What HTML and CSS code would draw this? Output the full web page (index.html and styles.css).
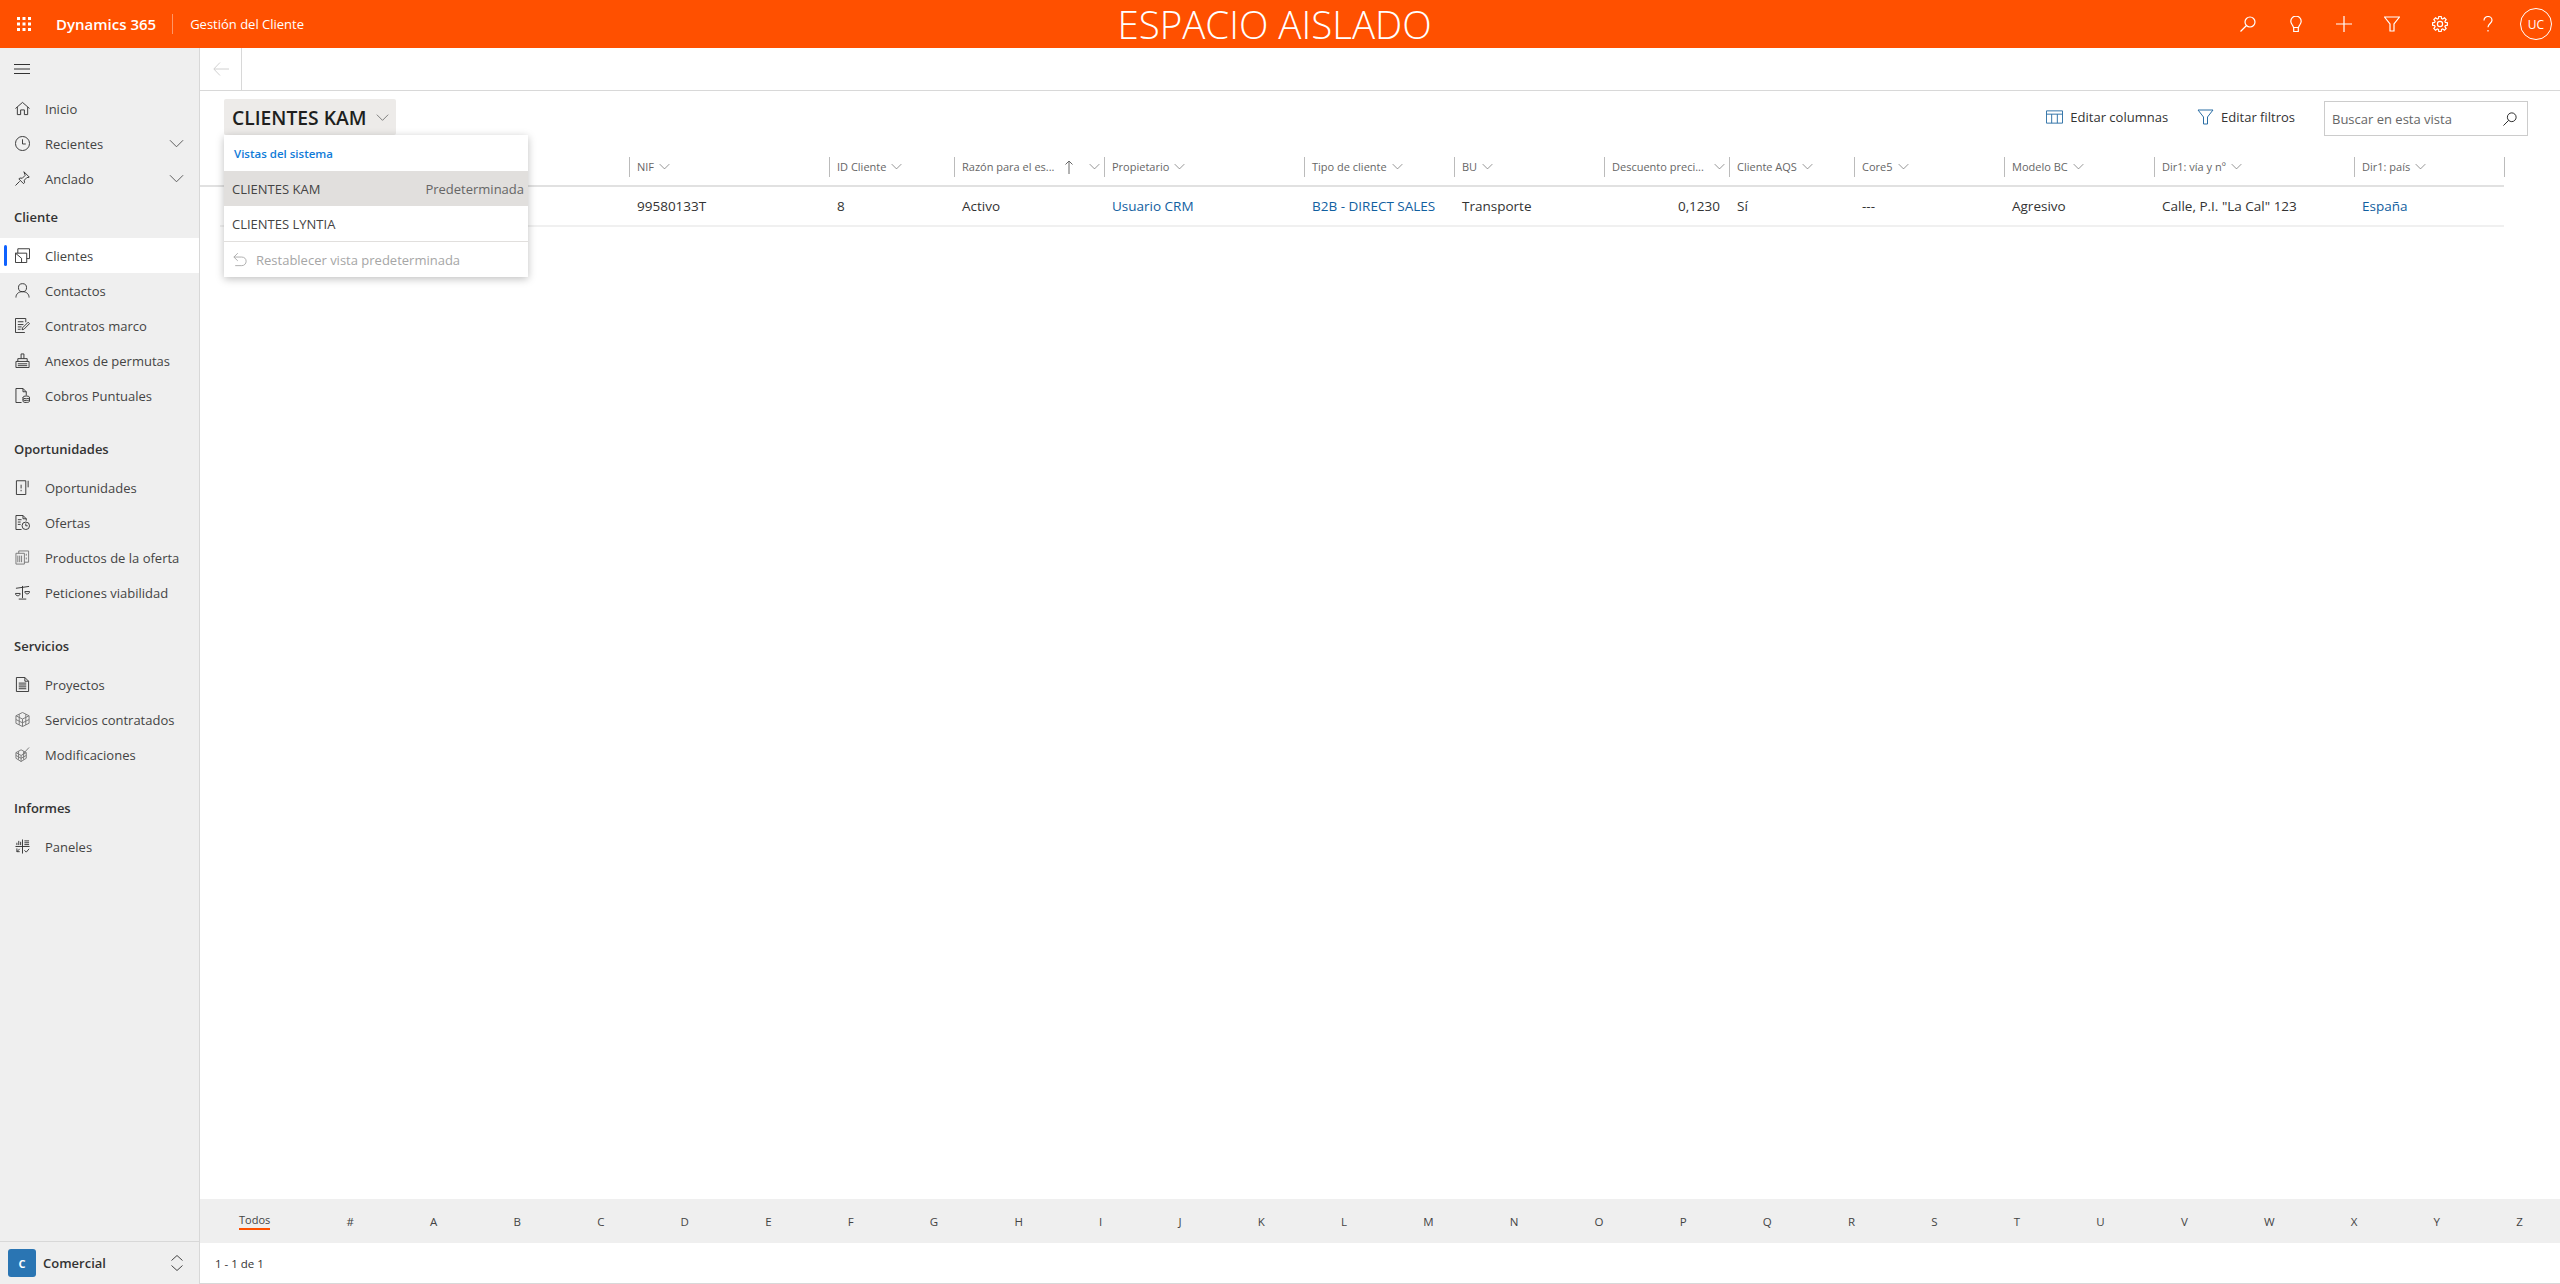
FILE: index.html
```html
<!DOCTYPE html>
<html lang="es">
<head>
    <meta charset="UTF-8">
    <title>Clientes - Gestión del Cliente</title>
    <link rel="stylesheet" href="styles.css">
</head>
<body>
    <svg class="defs" width="0" height="0">
        <symbol id="chev" viewBox="0 0 16 16"><path d="M1 4.500l7 7 7-7"/></symbol>
    </svg>

    <header class="topbar">
        <svg class="waffle" viewBox="0 0 16 16"><path d="M1 1h3v3H1zM6.500 1h3v3h-3zM12 1h3v3h-3zM1 6.500h3v3H1zM6.500 6.500h3v3h-3zM12 6.500h3v3h-3zM1 12h3v3H1zM6.500 12h3v3h-3zM12 12h3v3h-3z"/></svg>
        <span class="brand">Dynamics 365</span>
        <span class="app-name">Gestión del Cliente</span>
        <div class="env-title">ESPACIO AISLADO</div>
        <div class="top-actions">
            <button class="top-btn"><svg viewBox="0 0 16 16"><circle cx="10" cy="6" r="5"/><path d="M6.500 9.500L.5 15.500"/></svg></button>
            <button class="top-btn"><svg viewBox="0 0 16 16"><path d="M5.500 11.500C5 9 2.800 8 2.800 5.300a5.200 5.200 0 0 1 10.400 0c0 2.700-2.200 3.700-2.700 6.200zM5.700 11.500v4h4.600v-4"/></svg></button>
            <button class="top-btn"><svg viewBox="0 0 16 16"><path d="M8 0v16M0 8h16"/></svg></button>
            <button class="top-btn"><svg viewBox="0 0 16 16"><path d="M.5 1h15l-5.500 7v7H6V8z"/></svg></button>
            <button class="top-btn"><svg viewBox="0 0 16 16"><circle cx="8" cy="8" r="2.600"/><path d="M13.380 6.460L15.510 6.810V9.190L13.380 9.540L12.900 10.710L14.150 12.470L12.470 14.150L10.710 12.900L9.540 13.380L9.190 15.510H6.810L6.460 13.380L5.290 12.900L3.530 14.150L1.850 12.470L3.100 10.710L2.620 9.540L.49 9.190V6.810L2.620 6.460L3.100 5.290L1.850 3.530L3.530 1.850L5.290 3.100L6.460 2.620L6.810 .49H9.190L9.540 2.620L10.710 3.100L12.470 1.850L14.150 3.530L12.900 5.290Z"/></svg></button>
            <button class="top-btn"><svg viewBox="0 0 16 16"><path d="M4 4.500C4 2 6 .5 8 .5s4 1.500 4 3.800c0 3-4 3.500-4 7M8 14v1.500"/></svg></button>
            <div class="avatar">UC</div>
        </div>
    </header>

    <div class="shell">
        <nav class="sidebar">
            <div class="burger"><svg viewBox="0 0 16 10"><path d="M0 .5h16M0 5h16M0 9.500h16"/></svg></div>

            <a class="nav-item"><svg class="nav-ico" viewBox="0 0 16 16"><path d="M.5 8L8 1.500 15.500 8M2.500 6.500v8h3.500v-5h4v5h3.500v-8"/></svg>Inicio</a>
            <a class="nav-item"><svg class="nav-ico" viewBox="0 0 16 16"><circle cx="8" cy="8" r="7.500"/><path d="M8 3.500V8.500h3.500"/></svg>Recientes<svg class="nav-chev"><use href="#chev"/></svg></a>
            <a class="nav-item"><svg class="nav-ico" viewBox="0 0 16 16"><path d="M9.500.8l5.700 5.700-1.300.6-1-.3-3 3 .2 2.700-1 1-5-5 1-1 2.700.2 3-3-.3-1zM5 11L.5 15.500"/></svg>Anclado<svg class="nav-chev"><use href="#chev"/></svg></a>

            <h3 class="nav-heading">Cliente</h3>
            <a class="nav-item active"><svg class="nav-ico" viewBox="0 0 16 16"><path d="M.5 5.500h12v10H.5zM.5 5.500L7 11v4.500M3 5.500V.8h12.500v10.500h-3"/></svg>Clientes</a>
            <a class="nav-item"><svg class="nav-ico" viewBox="0 0 16 16"><circle cx="8" cy="5" r="4.300"/><path d="M1 15.500c0-3.500 2.500-6.300 7-6.300s7 2.800 7 6.300"/></svg>Contactos</a>
            <a class="nav-item"><svg class="nav-ico" viewBox="0 0 16 16"><path d="M10.500 15.500H.5V.5h11v4M3 4h6M3 7h6M3 9.500h4M3 12h3M7.500 12.500l.5-2 6-6 1.500 1.500-6 6z"/></svg>Contratos marco</a>
            <a class="nav-item"><svg class="nav-ico" viewBox="0 0 16 16"><path d="M1 9h14v6.500H1zM3 9V6h10v3M6.500 6V1h3v5M3 11.500h10M3 13.500h10"/></svg>Anexos de permutas</a>
            <a class="nav-item"><svg class="nav-ico" viewBox="0 0 16 16"><path d="M7 15.500H1V.5h7.500l3.500 3.500v4M8.500.5V4H12"/><ellipse cx="12" cy="10" rx="3.500" ry="1.500"/><path d="M8.500 10v4c0 .8 1.500 1.500 3.500 1.500s3.500-.7 3.500-1.500v-4M8.500 12c0 .8 1.500 1.500 3.500 1.500s3.500-.7 3.500-1.500"/></svg>Cobros Puntuales</a>

            <h3 class="nav-heading spaced">Oportunidades</h3>
            <a class="nav-item"><svg class="nav-ico" viewBox="0 0 16 16"><path d="M1.500.8h10v14.700h-10zM14 .8v7M6.500 5v4M6.500 10.500v1.500"/></svg>Oportunidades</a>
            <a class="nav-item"><svg class="nav-ico" viewBox="0 0 16 16"><path d="M7 15.500H1V.5h7.500L12 4v2M8.500.5V4H12M3 5h4M3 7.500h3M3 10h3"/><circle cx="11.500" cy="11.500" r="4"/><path d="M11.500 9v2.500h2"/></svg>Ofertas</a>
            <a class="nav-item"><svg class="nav-ico muted" viewBox="0 0 16 16"><path d="M1 3.500h9v11.500H1zM4 3.500V1h10.500v12H10M3 6v7M5 6v7M7 6v7M12 4v2M12 8v2"/></svg>Productos de la oferta</a>
            <a class="nav-item"><svg class="nav-ico" viewBox="0 0 16 16"><path d="M8 1v13M4 15h8M1 3.500l14-2M.5 9c0 1.500 1 2.500 2.500 2.500s2.500-1 2.500-2.500zM10.500 7c0 1.500 1 2.500 2.500 2.500s2.500-1 2.500-2.500z"/></svg>Peticiones viabilidad</a>

            <h3 class="nav-heading spaced">Servicios</h3>
            <a class="nav-item"><svg class="nav-ico" viewBox="0 0 16 16"><path d="M1.500 15.500V.5h9l4 4v11zM10.500.5v4h4M4 6.500h8M4 8.500h8M4 10.500h8M4 12.500h8"/></svg>Proyectos</a>
            <a class="nav-item"><svg class="nav-ico muted" viewBox="0 0 16 16"><path d="M8 .5l7 3.500v8l-7 3.500-7-3.500V4zM1 4l7 3.500L15 4M8 7.500v8M1 8l7 3.500L15 8M4.500 2.300v11.500M11.500 2.300v11.500"/></svg>Servicios contratados</a>
            <a class="nav-item"><svg class="nav-ico muted" viewBox="0 0 16 16"><path d="M6.500 3L12 6v6l-5.500 3.500L1 12V6zM1 6l5.500 3L12 6M6.500 9v6.500M1 9l5.500 3L12 9M3.800 4.500v9M9.200 4.500v9M8 8l7-7.500"/></svg>Modificaciones</a>

            <h3 class="nav-heading spaced">Informes</h3>
            <a class="nav-item"><svg class="nav-ico" viewBox="0 0 16 16"><path d="M.5 8h15M8 .5v15M2 6.500V4M4 6.500V2M6 6.500V3M10 2h5M10 4h5M10 6h5M2 10v3.500h3M2 13.500l3-3M10 12l2 2 3-3.500"/></svg>Paneles</a>

            <div class="area-switch">
                <span class="area-badge">C</span>
                <span class="area-name">Comercial</span>
                <svg class="area-arrows" viewBox="0 0 12 16"><path d="M.5 5.500L6 .5l5.500 5M.5 10.500l5.500 5 5.500-5"/></svg>
            </div>
        </nav>

        <main class="content">
            <div class="commandbar">
                <div class="back-cell"><svg viewBox="0 0 16 14"><path d="M7 .5L.8 7 7 13.500M1 7h15"/></svg></div>
            </div>

            <div class="view-head">
                <button class="view-selector">CLIENTES KAM<svg class="view-chev"><use href="#chev"/></svg></button>
                <div class="view-tools">
                    <a class="tool"><svg class="tool-ico" viewBox="0 0 18 16"><path d="M.5 1.500h17v13H.5zM.5 5h17M6 5v9.500M12 5v9.500"/></svg>Editar columnas</a>
                    <a class="tool"><svg class="tool-ico" viewBox="0 0 16 16"><path d="M.5 1h15l-5.500 7v7H6V8z"/></svg>Editar filtros</a>
                    <div class="view-search">
                        <span>Buscar en esta vista</span>
                        <svg viewBox="0 0 16 16"><circle cx="10" cy="6" r="5"/><path d="M6.500 9.500L.5 15.500"/></svg>
                    </div>
                </div>

                <div class="view-menu">
                    <div class="menu-title">Vistas del sistema</div>
                    <div class="menu-row selected"><span>CLIENTES KAM</span><span class="menu-default">Predeterminada</span></div>
                    <div class="menu-row"><span>CLIENTES LYNTIA</span></div>
                    <div class="menu-reset">
                        <svg viewBox="0 0 16 16"><path d="M5.500.8L1 5.200l4.500 4.400M1 5.200h9c3 0 5 2 5 4.800s-2 5-5 5H2.500"/></svg>
                        Restablecer vista predeterminada
                    </div>
                </div>
            </div>

            <div class="grid-wrap">
                <div class="grid-row grid-header">
                    <div class="hcell blank"></div>
                    <div class="hcell">NIF<svg class="hchev"><use href="#chev"/></svg></div>
                    <div class="hcell">ID Cliente<svg class="hchev"><use href="#chev"/></svg></div>
                    <div class="hcell">Razón para el es...<svg class="sort" viewBox="0 0 10 14"><path d="M5 1v13M1.500 4.500L5 1l3.500 3.500"/></svg><svg class="hchev end"><use href="#chev"/></svg></div>
                    <div class="hcell">Propietario<svg class="hchev"><use href="#chev"/></svg></div>
                    <div class="hcell">Tipo de cliente<svg class="hchev"><use href="#chev"/></svg></div>
                    <div class="hcell">BU<svg class="hchev"><use href="#chev"/></svg></div>
                    <div class="hcell">Descuento preci...<svg class="hchev end"><use href="#chev"/></svg></div>
                    <div class="hcell">Cliente AQS<svg class="hchev"><use href="#chev"/></svg></div>
                    <div class="hcell">Core5<svg class="hchev"><use href="#chev"/></svg></div>
                    <div class="hcell">Modelo BC<svg class="hchev"><use href="#chev"/></svg></div>
                    <div class="hcell">Dir1: vía y nº<svg class="hchev"><use href="#chev"/></svg></div>
                    <div class="hcell last">Dir1: país<svg class="hchev"><use href="#chev"/></svg></div>
                </div>
                <div class="grid-row grid-data">
                    <div class="cell"></div>
                    <div class="cell">99580133T</div>
                    <div class="cell">8</div>
                    <div class="cell">Activo</div>
                    <div class="cell link">Usuario CRM</div>
                    <div class="cell link">B2B - DIRECT SALES</div>
                    <div class="cell">Transporte</div>
                    <div class="cell num">0,1230</div>
                    <div class="cell">Sí</div>
                    <div class="cell">---</div>
                    <div class="cell">Agresivo</div>
                    <div class="cell">Calle, P.I. "La Cal" 123</div>
                    <div class="cell link">España</div>
                </div>
            </div>

            <div class="alpha-bar">
                <span class="alpha-all">Todos</span>
                <span>#</span><span>A</span><span>B</span><span>C</span><span>D</span><span>E</span><span>F</span><span>G</span><span>H</span><span>I</span><span>J</span><span>K</span><span>L</span><span>M</span><span>N</span><span>O</span><span>P</span><span>Q</span><span>R</span><span>S</span><span>T</span><span>U</span><span>V</span><span>W</span><span>X</span><span>Y</span><span>Z</span>
            </div>
            <div class="pager">1 - 1 de 1</div>
        </main>
    </div>
</body>
</html>
```
FILE: styles.css
```css
:root {
    --orange: #ff5000;
    --side-bg: #efefef;
    --line: #d8d8d8;
    --text: #333;
    --link: #1160a0;
}

* {
    box-sizing: border-box;
}

body {
    margin: 0;
    height: 100vh;
    display: flex;
    flex-direction: column;
    overflow: hidden;
    font-family: "Open Sans", "Liberation Sans", sans-serif;
    font-size: 13px;
    color: var(--text);
    background: #fff;
}

svg {
    fill: none;
    stroke: currentColor;
    stroke-width: 1;
}

.defs {
    position: absolute;
}

/* barra superior */
.topbar {
    height: 48px;
    flex: none;
    display: flex;
    align-items: center;
    background: var(--orange);
    color: #fff;
    position: relative;
}

.waffle {
    width: 16px;
    height: 16px;
    margin-left: 16px;
    fill: #fff;
    stroke: none;
}

.brand {
    margin-left: 24px;
    font-size: 15px;
    font-weight: 600;
    padding-right: 16px;
    border-right: 1px solid rgba(255, 255, 255, 0.4);
    line-height: 20px;
}

.app-name {
    margin-left: 17px;
    font-size: 13px;
}

.env-title {
    flex: 1;
    text-align: center;
    font-size: 38.500px;
    font-weight: 300;
    line-height: 48px;
    padding-left: 21px;
}

.top-actions {
    display: flex;
    align-items: center;
}

.top-btn {
    width: 48px;
    height: 48px;
    padding: 0;
    border: 0;
    background: none;
    color: #fff;
    display: flex;
    align-items: center;
    justify-content: center;
}

.top-btn svg {
    width: 16px;
    height: 16px;
    stroke-width: 1.200;
}

.avatar {
    width: 32px;
    height: 32px;
    margin: 0 8px;
    border: 1px solid #fff;
    border-radius: 50%;
    display: flex;
    align-items: center;
    justify-content: center;
    font-size: 12px;
}

/* estructura */
.shell {
    flex: 1;
    display: flex;
    min-height: 0;
}

.sidebar {
    width: 200px;
    flex: none;
    display: flex;
    flex-direction: column;
    background: var(--side-bg);
    border-right: 1px solid var(--line);
}

.burger {
    height: 43px;
    flex: none;
    display: flex;
    align-items: center;
    padding: 0 0 1px 14px;
}

.burger svg {
    width: 16px;
    height: 10px;
}

.nav-item {
    height: 35px;
    flex: none;
    display: flex;
    align-items: center;
    padding-left: 15px;
    color: #444;
    position: relative;
}

.nav-ico {
    width: 15px;
    height: 15px;
    margin-right: 15px;
    flex: none;
    color: #333;
}

.nav-ico.muted {
    color: #777;
}

.nav-chev {
    width: 15px;
    height: 15px;
    position: absolute;
    right: 15px;
    top: 10px;
    color: #555;
}

.nav-item.active {
    background: #fff;
}

.nav-item.active::before {
    content: "";
    position: absolute;
    left: 4px;
    top: 7px;
    bottom: 7px;
    width: 3px;
    border-radius: 2px;
    background: #0f62fe;
}

.nav-heading {
    margin: 0;
    height: 42px;
    flex: none;
    display: flex;
    align-items: center;
    padding-left: 14px;
    font-size: 13px;
    font-weight: 600;
    color: #333;
}

.nav-heading.spaced {
    margin-top: 15px;
}

.area-switch {
    margin-top: auto;
    height: 43px;
    flex: none;
    display: flex;
    align-items: center;
    padding-left: 8px;
    border-top: 1px solid var(--line);
}

.area-badge {
    width: 28px;
    height: 28px;
    border-radius: 3px;
    background: #2a75b3;
    color: #fff;
    font-size: 11px;
    font-weight: 700;
    display: flex;
    align-items: center;
    justify-content: center;
}

.area-name {
    margin-left: 7px;
    font-weight: 600;
    flex: 1;
}

.area-arrows {
    width: 12px;
    height: 16px;
    margin-right: 16px;
    color: #444;
}

/* contenido */
.content {
    flex: 1;
    min-width: 0;
    display: flex;
    flex-direction: column;
}

.commandbar {
    height: 43px;
    flex: none;
    border-bottom: 1px solid var(--line);
}

.back-cell {
    width: 42px;
    height: 42px;
    border-right: 1px solid var(--line);
    display: flex;
    align-items: center;
    padding-left: 13px;
    color: #d0d0d0;
}

.back-cell svg {
    width: 16px;
    height: 14px;
}

.view-head {
    height: 52px;
    flex: none;
    position: relative;
    display: flex;
    justify-content: space-between;
    padding: 8px 32px 0 24px;
}

.view-selector {
    width: 172px;
    height: 36px;
    padding: 0 8px;
    border: 0;
    border-radius: 2px;
    background: #edebe9;
    display: flex;
    align-items: center;
    font-family: inherit;
    font-size: 19.300px;
    font-weight: 600;
    color: #201f1e;
    white-space: nowrap;
}

.view-chev {
    width: 13px;
    height: 13px;
    margin-left: 9px;
    color: #666;
    flex: none;
}

.view-tools {
    display: flex;
    align-items: flex-start;
}

.tool {
    display: flex;
    align-items: center;
    height: 36px;
    margin-right: 29px;
    color: #333;
    font-size: 13px;
}

.tool-ico {
    width: 17px;
    height: 16px;
    margin-right: 7px;
    color: #2a6ea5;
}

.view-search {
    width: 204px;
    height: 35px;
    margin-top: 2px;
    border: 1px solid #ccc;
    display: flex;
    align-items: center;
    justify-content: space-between;
    padding: 0 10px 0 7px;
    color: #666;
}

.view-search svg {
    width: 14px;
    height: 14px;
    color: #111;
}

.view-menu {
    position: absolute;
    left: 24px;
    top: 44px;
    width: 304px;
    background: #fff;
    box-shadow: 0 2px 8px rgba(0, 0, 0, 0.25);
    z-index: 5;
}

.menu-title {
    height: 36px;
    padding-left: 10px;
    display: flex;
    align-items: center;
    font-size: 11.500px;
    font-weight: 600;
    color: #0f7bd8;
}

.menu-row {
    height: 35px;
    display: flex;
    align-items: center;
    justify-content: space-between;
    padding: 0 4px 0 8px;
    color: #444;
}

.menu-row.selected {
    background: #e1dfdd;
}

.menu-default {
    color: #666;
}

.menu-reset {
    height: 36px;
    border-top: 1px solid #e1dfdd;
    display: flex;
    align-items: center;
    padding-left: 9px;
    color: #a6a6a6;
}

.menu-reset svg {
    width: 14px;
    height: 15px;
    margin-right: 9px;
}

/* tabla */
.grid-wrap {
    flex: 1;
    padding-right: 56px;
}

.grid-row {
    display: grid;
    grid-template-columns: 429px 200px 125px 150px 200px 150px 150px 125px 125px 150px 150px 200px 150px;
}

.grid-header {
    height: 44px;
    align-items: start;
    padding-top: 14px;
    border-bottom: 2px solid #e1e1e1;
    color: #666;
    font-size: 11px;
}

.hcell {
    height: 20px;
    display: flex;
    align-items: center;
    padding: 0 0 1px 7px;
    border-left: 1px solid #bbb;
    white-space: nowrap;
}

.hcell.blank {
    border-left: 0;
}

.hcell.last {
    border-right: 1px solid #bbb;
    margin-right: -1px;
}

.hchev {
    width: 11px;
    height: 11px;
    margin-left: 5px;
    color: #666;
    flex: none;
}

.hchev.end {
    margin-left: auto;
    margin-right: 4px;
}

.sort {
    width: 10px;
    height: 14px;
    margin-left: 9px;
    flex: none;
}

.grid-data {
    height: 40px;
    margin-left: 20px;
    grid-template-columns: 409px 200px 125px 150px 200px 150px 150px 125px 125px 150px 150px 200px 150px;
    border-bottom: 2px solid #f0f0f0;
    align-items: center;
    font-size: 13.500px;
}

.cell {
    padding-left: 8px;
    white-space: nowrap;
}

.cell.link {
    color: var(--link);
}

.cell.num {
    text-align: right;
    padding-right: 9px;
}

.alpha-bar {
    height: 44px;
    flex: none;
    display: flex;
    align-items: center;
    justify-content: space-between;
    background: var(--side-bg);
    padding: 0 37px 0 39px;
    font-size: 11.500px;
    color: #444;
}

.alpha-all {
    font-size: 11px;
    line-height: 15px;
    margin-top: -1px;
    padding-bottom: 1px;
    border-bottom: 2px solid var(--orange);
}

.pager {
    height: 41px;
    flex: none;
    display: flex;
    align-items: center;
    padding-left: 15px;
    font-size: 11.500px;
    border-bottom: 1px solid var(--line);
}
```
